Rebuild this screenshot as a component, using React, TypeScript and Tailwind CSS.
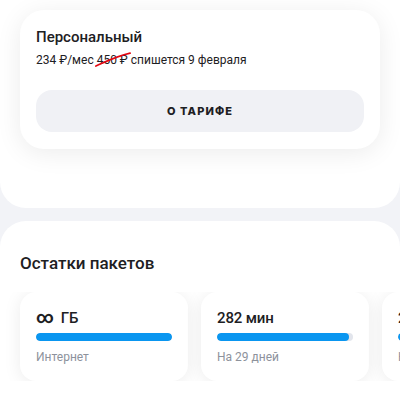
import React from "react";

type Pack = {
  value: React.ReactNode;
  label: string;
  fill: number;
};

const packs: Pack[] = [
  {
    value: (
      <span className="flex items-center gap-[7px]">
        <span className="text-[17px] leading-none font-bold -mt-[1px]">∞</span>
        <span>ГБ</span>
      </span>
    ),
    label: "Интернет",
    fill: 100,
  },
  { value: "282 мин", label: "На 29 дней", fill: 97 },
  { value: "25 ГБ", label: "На 29 дней", fill: 80 },
];

function PackCard({ pack }: { pack: Pack }) {
  return (
    <div className="w-[168px] h-[89px] shrink-0 rounded-[16px] bg-white shadow-[0_2px_18px_rgba(0,0,0,0.08)] px-4 pt-[16px]">
      <div className="text-[15px] leading-[20px] font-medium tracking-[-0.01em] text-[#1d2023]">{pack.value}</div>
      <div className="mt-[5px] h-[8px] rounded-full bg-[#e2e5ec] overflow-hidden">
        <div className="h-full rounded-full bg-[#0a96f0]" style={{ width: `${pack.fill}%` }} />
      </div>
      <div className="mt-[8px] text-[12px] leading-[16px] text-[#8d929c]">{pack.label}</div>
    </div>
  );
}

export default function App() {
  return (
    <div className="w-[400px] h-[407px] overflow-hidden bg-[#f2f3f7] font-['Roboto',sans-serif]">
      {/* tariff panel */}
      <div className="bg-white rounded-b-[26px] px-5 pt-[10px] pb-[59px]">
        <div className="rounded-[24px] bg-white shadow-[0_4px_26px_rgba(0,0,0,0.08)] px-4 pt-[17px] pb-[17px]">
          <div className="text-[15px] leading-[20px] font-medium text-[#1d2023]">Персональный</div>
          <div className="mt-[4px] text-[12px] leading-[18px] text-[#1d2023]">
            234 ₽/мес{" "}
            <span className="relative inline-block">
              450 ₽
              <svg
                className="absolute -left-[2px] top-0 w-[37px] h-[19px]"
                viewBox="0 0 40 20"
                fill="none"
              >
                <path
                  d="M1 16 C 12 11, 24 5, 38 2"
                  stroke="#e30611"
                  strokeWidth="1.8"
                  strokeLinecap="round"
                />
              </svg>
            </span>{" "}
            спишется 9 февраля
          </div>
          <button className="mt-[21px] w-full h-[42px] rounded-[16px] bg-[#f0f1f5] font-['Inter',sans-serif] text-[11px] font-extrabold tracking-[0.1em] text-[#1d2023]">
            О ТАРИФЕ
          </button>
        </div>
      </div>

      {/* packages panel */}
      <div className="mt-[13px] bg-white rounded-t-[26px] h-[200px] pt-[30px]">
        <div className="px-5 text-[17px] leading-[24px] font-medium text-[#1d2023]">Остатки пакетов</div>
        <div className="mt-[17px] pl-5 flex gap-[13px] overflow-hidden">
          {packs.map((p, i) => (
            <PackCard key={i} pack={p} />
          ))}
        </div>
      </div>
    </div>
  );
}
